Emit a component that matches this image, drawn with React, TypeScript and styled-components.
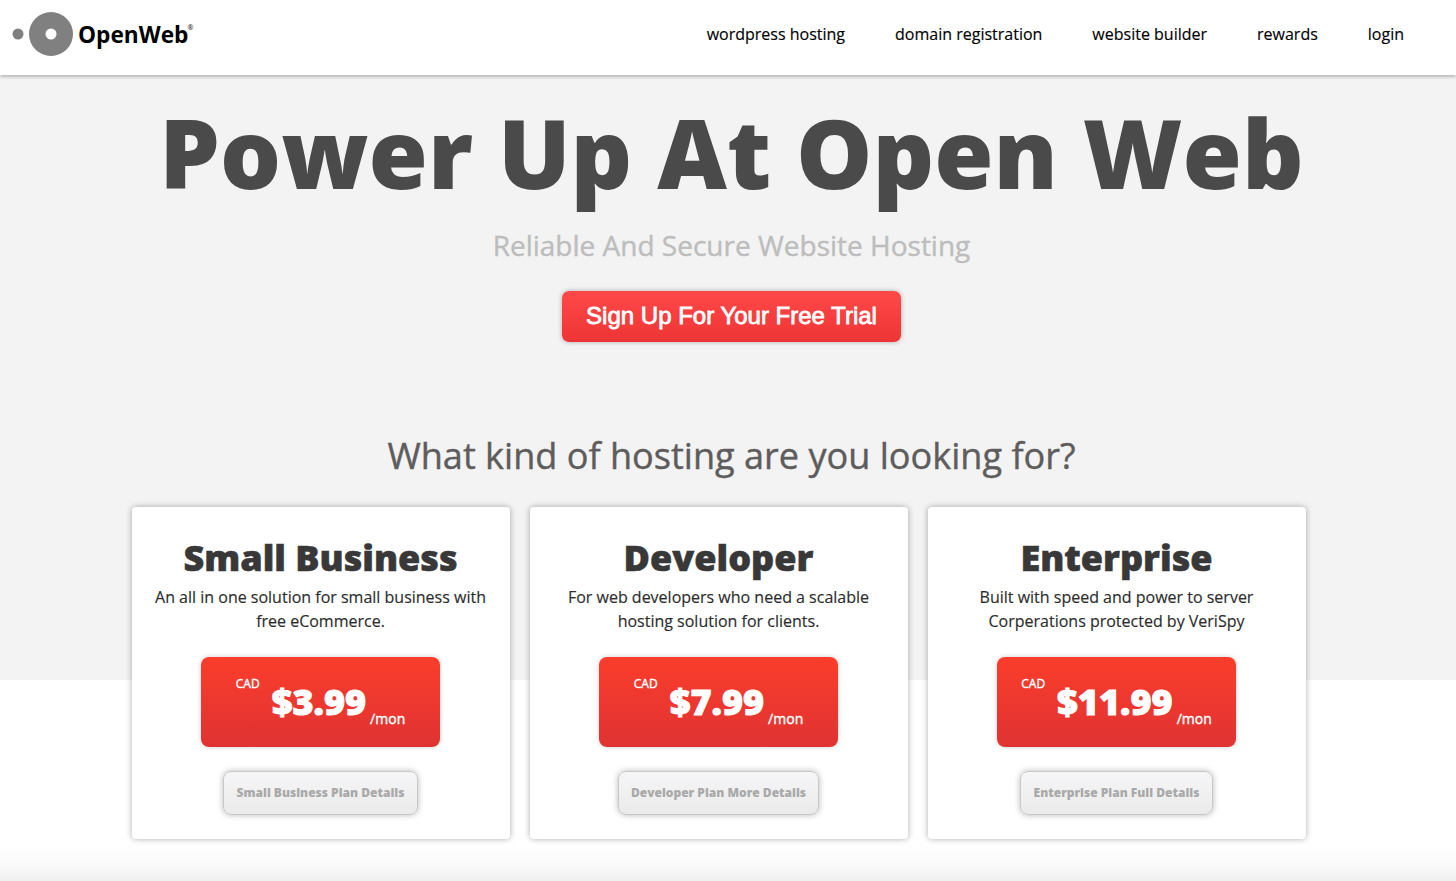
import React from 'react';
import styled, { createGlobalStyle } from 'styled-components';

const Global = createGlobalStyle`
  * { box-sizing: border-box; }
  body { margin: 0; background: #fff; font-family: "Open Sans", sans-serif; color: #2c2c2c; overflow: hidden; }
  h1, h2, h3, p { margin: 0; }
`;
const Page = styled.div`
  height: 881px;
  background: linear-gradient(#fff, #fafafa 50%, #f0f0f0) 0 846px / 100% 35px no-repeat, linear-gradient(#f3f3f3, #f3f3f3) 0 0 / 100% 680px no-repeat, #fff;
`;
const Header = styled.header`
  height: 75px;
  display: flex;
  justify-content: space-between;
  background: #fff;
  box-shadow: 0 2px 3px rgba(0, 0, 0, 0.24);
  padding: 0 52px 0 12px;
`;
const Logo = styled.a`
  display: flex;
  height: 68px;
  align-items: center;
  color: #000;
  font-size: 22.7px;
  font-weight: 700;
  svg { margin-right: 4px; }
  sup { font-size: 7px; font-weight: 400; align-self: flex-start; margin: 24px 0 0 -1px; line-height: 8px; }
`;
const Nav = styled.nav`
  display: flex;
  gap: 50px;
  height: 68px;
  align-items: center;
`;
const NavLink = styled.a`
  font-size: 16px;
  color: #000;
  white-space: nowrap;
  -webkit-text-stroke: 0.15px currentColor;
`;
const Hero = styled.section`
  display: flex;
  flex-direction: column;
  align-items: center;
  padding: 19px 0 0 7px;
`;
const Title = styled.h1`
  font-size: 96px;
  line-height: 116px;
  font-weight: 800;
  color: #4a4a4a;
  white-space: nowrap;
`;
const Subtitle = styled.p`
  font-size: 28px;
  line-height: 40px;
  margin-top: 15px;
  color: #bdbdbd;
  white-space: nowrap;
  -webkit-text-stroke: 0.4px currentColor;
`;
const SignUp = styled.button`
  width: 339px;
  height: 51px;
  margin-top: 26px;
  padding: 0 0 1px;
  border: 0;
  border-radius: 7px;
  color: #fff;
  font: 24px "Liberation Sans", sans-serif;
  -webkit-text-stroke: 0.8px currentColor;
  background: linear-gradient(#ff4848, #ee3535);
  box-shadow: 0 0 5px rgba(0, 0, 0, 0.3);
`;
const Question = styled.h2`
  margin-top: 88px;
  font-size: 36.1px;
  line-height: 50px;
  font-weight: 400;
  color: #5e5c5c;
  -webkit-text-stroke: 0.4px currentColor;
`;
const Plans = styled.section`
  display: flex;
  gap: 20px;
  padding: 27px 0 0 132px;
`;
const Card = styled.article`
  width: 378px;
  height: 332px;
  display: flex;
  flex-direction: column;
  align-items: center;
  background: #fff;
  border-radius: 4px;
  box-shadow: 0 0 6px rgba(0, 0, 0, 0.32);
  padding: 26px 1px 0 0;
`;
const PlanName = styled.h3`
  font-size: 36px;
  line-height: 50px;
  font-weight: 800;
  color: #383838;
  -webkit-text-stroke: 0.6px currentColor;
`;
const Description = styled.p`
  font-size: 16px;
  line-height: 24px;
  margin-top: 2px;
  text-align: center;
  white-space: pre;
  -webkit-text-stroke: 0.15px currentColor;
`;
const Price = styled.div`
  width: 239px;
  height: 90px;
  margin-top: 24px;
  border-radius: 8px;
  display: flex;
  justify-content: center;
  color: #fff;
  background: linear-gradient(#fb3d2b, #df3333);
  box-shadow: 0 0 5px rgba(0, 0, 0, 0.2);
  -webkit-text-stroke: 0.4px currentColor;
`;
const Currency = styled.span`
  font-size: 12px;
  line-height: 16px;
  margin: 19px 12px 0 0;
`;
const Amount = styled.strong`
  font-size: 36px;
  line-height: 50px;
  font-weight: 800;
  margin-top: 20px;
  -webkit-text-stroke: 1px currentColor;
`;
const Period = styled.span`
  font-size: 14px;
  line-height: 20px;
  margin: 52px 0 0 4px;
`;
const Details = styled.button<{ $width: number }>`
  width: ${(p) => p.$width}px;
  height: 44px;
  margin-top: 24px;
  padding: 0 0 2px;
  border: 1px solid #c8c8c8;
  border-radius: 8px;
  background: linear-gradient(#f6f6f8, #eaeaea);
  box-shadow: 0 0 6px rgba(0, 0, 0, 0.28);
  color: #a9a9a9;
  font: 800 12px "Open Sans", sans-serif;
`;

const links = ['wordpress hosting', 'domain registration', 'website builder', 'rewards', 'login'];
const plans = [
  { name: 'Small Business', text: 'An all in one solution for small business with\nfree eCommerce.', price: '$3.99', cta: 'Small Business Plan Details', width: 195 },
  { name: 'Developer', text: 'For web developers who need a scalable\nhosting solution for clients.', price: '$7.99', cta: 'Developer Plan More Details', width: 201 },
  { name: 'Enterprise', text: 'Built with speed and power to server\nCorperations protected by VeriSpy', price: '$11.99', cta: 'Enterprise Plan Full Details', width: 193 },
];

export default function App() {
  return (
    <Page>
      <Global />
      <Header>
        <Logo>
          <svg width="62" height="46" viewBox="0 0 62 46">
            <circle cx="6" cy="23" r="5.5" fill="#808080" />
            <circle cx="39" cy="23" r="22" fill="#808080" />
            <circle cx="39" cy="23" r="5.5" fill="#fff" />
          </svg>
          <span>OpenWeb</span>
          <sup>®</sup>
        </Logo>
        <Nav>{links.map((l) => <NavLink key={l}>{l}</NavLink>)}</Nav>
      </Header>
      <Hero>
        <Title>Power Up At Open Web</Title>
        <Subtitle>Reliable And Secure Website Hosting</Subtitle>
        <SignUp>Sign Up For Your Free Trial</SignUp>
        <Question>What kind of hosting are you looking for?</Question>
      </Hero>
      <Plans>
        {plans.map((p) => (
          <Card key={p.name}>
            <PlanName>{p.name}</PlanName>
            <Description>{p.text}</Description>
            <Price>
              <Currency>CAD</Currency>
              <Amount>{p.price}</Amount>
              <Period>/mon</Period>
            </Price>
            <Details $width={p.width}>{p.cta}</Details>
          </Card>
        ))}
      </Plans>
    </Page>
  );
}
